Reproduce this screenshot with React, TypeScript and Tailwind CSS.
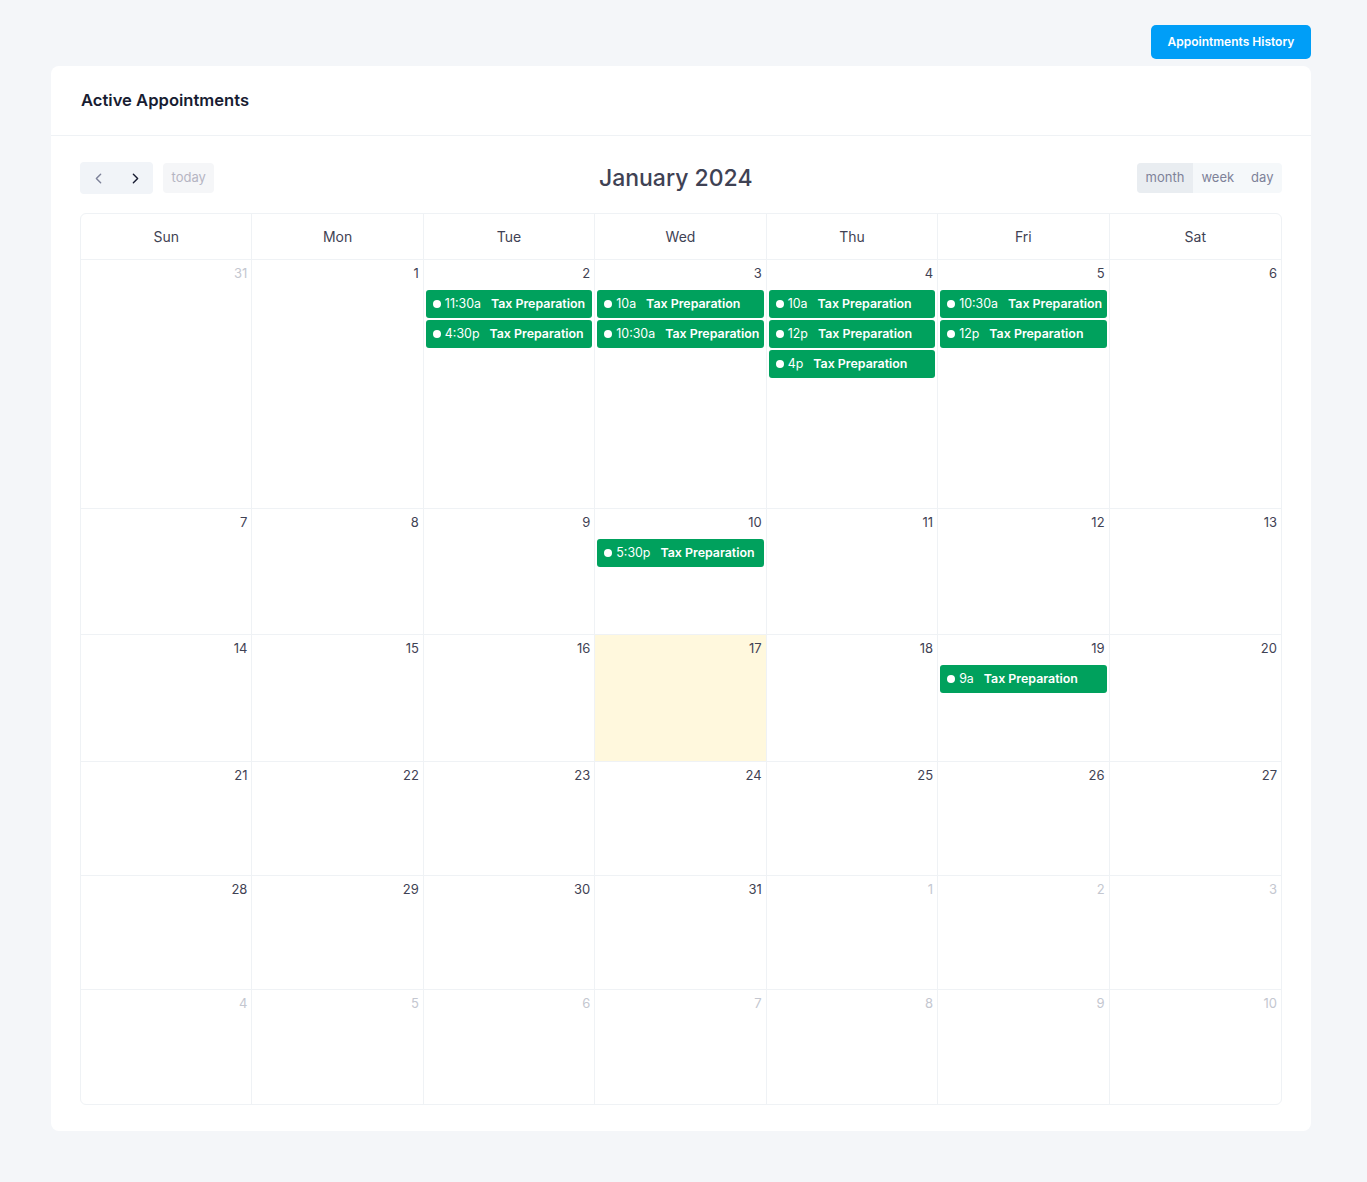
import { ChevronLeft, ChevronRight } from 'lucide-react';

type Ev = { time: string; title: string };

const EVENTS: Record<string, Ev[]> = {
  '2': [
    { time: '11:30a', title: 'Tax Preparation' },
    { time: '4:30p', title: 'Tax Preparation' },
  ],
  '3': [
    { time: '10a', title: 'Tax Preparation' },
    { time: '10:30a', title: 'Tax Preparation' },
  ],
  '4': [
    { time: '10a', title: 'Tax Preparation' },
    { time: '12p', title: 'Tax Preparation' },
    { time: '4p', title: 'Tax Preparation' },
  ],
  '5': [
    { time: '10:30a', title: 'Tax Preparation' },
    { time: '12p', title: 'Tax Preparation' },
  ],
  '10': [{ time: '5:30p', title: 'Tax Preparation' }],
  '19': [{ time: '9a', title: 'Tax Preparation' }],
};

const DAYS = ['Sun', 'Mon', 'Tue', 'Wed', 'Thu', 'Fri', 'Sat'];
const ROW_HEIGHTS = ['h-[249px]', 'h-[126px]', 'h-[127px]', 'h-[114px]', 'h-[114px]', 'h-[114px]'];

// 6 weeks starting Sun Dec 31
function buildWeeks() {
  const weeks: { day: number; current: boolean }[][] = [];
  const cells: { day: number; current: boolean }[] = [{ day: 31, current: false }];
  for (let d = 1; d <= 31; d++) cells.push({ day: d, current: true });
  let n = 1;
  while (cells.length < 42) cells.push({ day: n++, current: false });
  for (let i = 0; i < 6; i++) weeks.push(cells.slice(i * 7, i * 7 + 7));
  return weeks;
}

function EventChip({ ev }: { ev: Ev }) {
  return (
    <div className="mx-[2px] h-[28px] rounded-[3px] bg-[#00a15d] flex items-center pl-[7px] text-white text-[12.4px] whitespace-nowrap overflow-hidden">
      <span className="w-[8px] h-[8px] rounded-full bg-white shrink-0" />
      <span className="ml-[4px]">{ev.time}</span>
      <span className="ml-[10px] font-semibold">{ev.title}</span>
    </div>
  );
}

export default function App() {
  const weeks = buildWeeks();
  return (
    <div className="min-h-screen bg-[#f4f6f9] pt-[25px] pb-[52px]" style={{ fontFamily: 'Inter, "Noto Sans", sans-serif' }}>
      <div className="w-[1260px] ml-[51px]">
        <div className="flex justify-end">
          <button className="h-[34px] w-[160px] rounded-[5px] bg-[#009ef7] text-white text-[12px] font-semibold">
            Appointments History
          </button>
        </div>

        <div className="mt-[7px] bg-white rounded-[8px]">
          <div className="h-[70px] px-[30px] flex items-center border-b border-[#eff2f5]">
            <h3 className="text-[16.6px] font-semibold text-[#181c32]">Active Appointments</h3>
          </div>

          <div className="px-[29px] pt-[26px] pb-[26px]">
            <div className="flex items-center justify-between h-[32px]">
              <div className="flex items-center gap-[10px]">
                <div className="flex h-[32px] rounded-[4px] bg-[#f1f4f8]">
                  <button className="w-[37px] flex items-center justify-center text-[#7e8299]">
                    <ChevronLeft size={17} strokeWidth={2} />
                  </button>
                  <button className="w-[36px] flex items-center justify-center text-[#181c32]">
                    <ChevronRight size={17} strokeWidth={2} />
                  </button>
                </div>
                <button className="h-[30px] px-[8.5px] rounded-[4px] bg-[#f5f6f8] text-[#b5b5c3] text-[13px]">today</button>
              </div>
              <h2 className="text-[23px] font-medium text-[#3f4254]">January 2024</h2>
              <div className="flex justify-end">
                <div className="flex h-[30px] rounded-[4px] bg-[#f5f8fa] text-[13px] text-[#7e8299] overflow-hidden">
                  <button className="px-[8.5px] bg-[#e9edf1]">month</button>
                  <button className="px-[8.5px]">week</button>
                  <button className="px-[8.5px]">day</button>
                </div>
              </div>
            </div>

            <div className="mt-[19px] border border-[#eff2f5] rounded-[6px] overflow-hidden">
              <div className="grid grid-cols-7 h-[46px] border-b border-[#eff2f5]">
                {DAYS.map((d, i) => (
                  <div
                    key={d}
                    className={`flex items-center justify-center text-[14px] text-[#3f4254] ${i < 6 ? 'border-r border-[#eff2f5]' : ''}`}
                  >
                    {d}
                  </div>
                ))}
              </div>
              {weeks.map((week, wi) => (
                <div key={wi} className={`grid grid-cols-7 ${ROW_HEIGHTS[wi]} ${wi < 5 ? 'border-b border-[#eff2f5]' : ''}`}>
                  {week.map((c, ci) => {
                    const isToday = c.current && c.day === 17;
                    const evs = c.current ? EVENTS[String(c.day)] ?? [] : [];
                    return (
                      <div
                        key={ci}
                        className={`${ci < 6 ? 'border-r border-[#eff2f5]' : ''} ${isToday ? 'bg-[#fff8dd]' : ''}`}
                      >
                        <div
                          className={`h-[26px] pt-[4px] pr-[4px] text-right text-[13px] leading-[18px] ${
                            c.current ? 'text-[#3f4254]' : 'text-[#c4c7d0]'
                          }`}
                        >
                          {c.day}
                        </div>
                        <div className="mt-[4px] flex flex-col gap-[2px]">
                          {evs.map((ev, k) => (
                            <EventChip key={k} ev={ev} />
                          ))}
                        </div>
                      </div>
                    );
                  })}
                </div>
              ))}
            </div>
          </div>
        </div>
      </div>
    </div>
  );
}
